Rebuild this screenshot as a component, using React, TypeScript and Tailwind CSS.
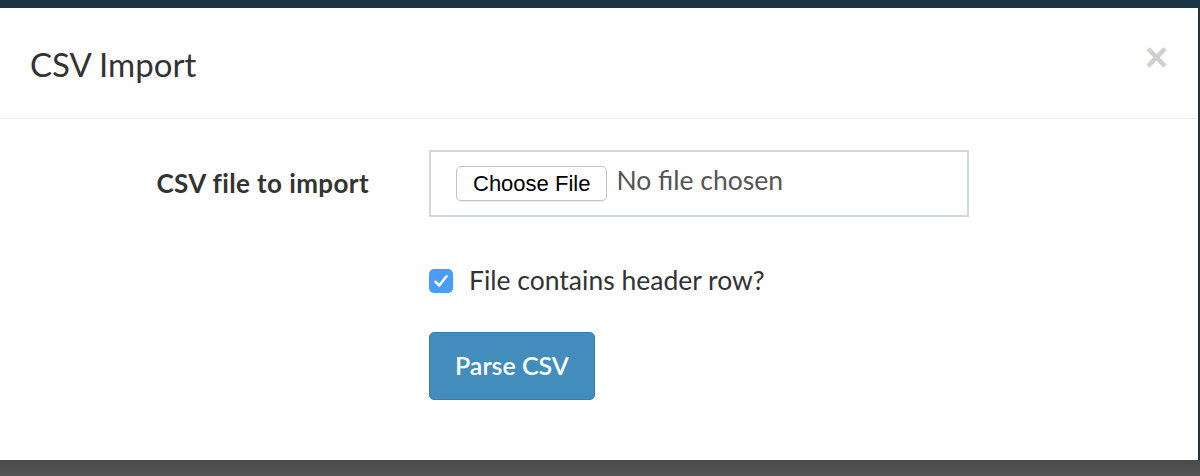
import React from "react";

export default function App() {
  return (
    <div className="w-[1200px] h-[476px] flex flex-col bg-[#1c3545] overflow-hidden" style={{ fontFamily: "Lato, 'Open Sans', sans-serif" }}>
      <div className="h-[8px] shrink-0 bg-[#1c3545]" />
      <div className="flex h-[452px] shrink-0">
        <div className="w-[1198px] bg-white flex flex-col">
          <div className="h-[111px] shrink-0 border-b border-[#efefef] flex items-center justify-between pl-[30px] pr-[30px]">
            <h1 className="text-[33px] text-[#333] leading-none pt-[2px]">CSV Import</h1>
            <span className="text-[40px] font-bold text-[#cfcfcf] leading-none pb-[12px]" style={{ fontFamily: "'Liberation Sans', Arial, sans-serif" }}>×</span>
          </div>
          <div className="flex flex-col pt-[31px]">
            <div className="flex items-center">
              <div className="w-[369px] text-right text-[26px] tracking-[0.4px] font-bold text-[#333]">CSV file to import</div>
              <div className="ml-[60px] w-[540px] h-[67px] border-2 border-[#d3d7df] flex items-center pl-[25px]">
                <button className="h-[35px] px-[16px] rounded-[5px] border border-[#c4c4c4] bg-white text-[22px] text-black leading-none shadow-[0_1px_1px_rgba(0,0,0,0.08)]" style={{ fontFamily: "'Liberation Sans', Arial, sans-serif" }}>Choose File</button>
                <span className="ml-[9px] text-[26.5px] text-[#555] pb-[6px]">No file chosen</span>
              </div>
            </div>
            <div className="flex items-center ml-[429px] mt-[52px] h-[24px]">
              <div className="w-[24px] h-[24px] rounded-[5px] bg-[#4b9cf5] flex items-center justify-center">
                <svg width="20" height="20" viewBox="0 0 16 16" fill="none">
                  <path d="M3.6 8.6 L6.6 11.6 L12.4 4.2" stroke="white" strokeWidth="2" strokeLinecap="round" strokeLinejoin="round" />
                </svg>
              </div>
              <span className="ml-[16px] text-[26.5px] text-[#333]">File contains header row?</span>
            </div>
            <div className="ml-[429px] mt-[39px]">
              <button className="w-[166px] h-[68px] rounded-[5px] bg-[#428dbc] border border-[#3a7fab] text-white text-[25px] font-semibold">Parse CSV</button>
            </div>
          </div>
        </div>
        <div className="w-[2px] bg-[#1c3545]" />
      </div>
      <div className="h-[16px] shrink-0 bg-gradient-to-b from-[#4a4a4a] to-[#555555]" />
    </div>
  );
}
